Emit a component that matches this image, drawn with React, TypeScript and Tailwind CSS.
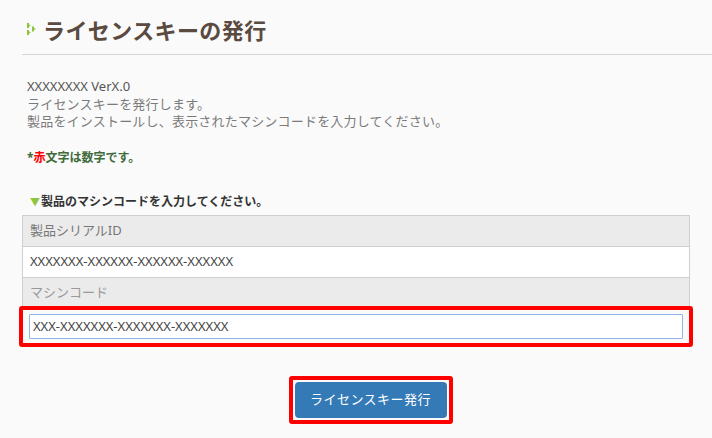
import React from "react";

function HeadIcon() {
  return (
    <svg width="9" height="12" viewBox="0 0 9 12" className="shrink-0">
      <path d="M0 0h2v1.5l2 1-2 1V5H0z" fill="#8cc63f" />
      <path d="M5 3.5h2V5l2 1-2 1v1.5H5z" fill="#8cc63f" />
      <path d="M0 7h2v1.5l2 1-2 1V12H0z" fill="#8cc63f" />
    </svg>
  );
}

export default function App() {
  return (
    <div
      className="w-[712px] h-[438px] bg-[#fafafa] overflow-hidden"
      style={{ fontFamily: '"Noto Sans", "Noto Sans CJK JP", sans-serif' }}
    >
      {/* Title */}
      <div className="ml-[22px] border-b border-[#d4d4d4] h-[55px] flex items-center pl-[5px] gap-[7px]">
        <div className="pt-[4px]">
          <HeadIcon />
        </div>
        <h1 className="text-[22px] font-bold text-[#5b4a40] tracking-[0.4px] leading-none pt-[5px]">
          ライセンスキーの発行
        </h1>
      </div>

      {/* Description */}
      <div className="pl-[27px] pt-[23px] text-[13px] leading-[17.5px] tracking-[0.2px] text-[#7a7a7a]">
        <p className="text-[#555] tracking-normal">XXXXXXXX VerX.0</p>
        <p>ライセンスキーを発行します。</p>
        <p>製品をインストールし、表示されたマシンコードを入力してください。</p>
        <p className="mt-[18px] text-[12px] tracking-normal font-bold text-[#3f6b3a]">
          *<span className="text-[#ff0000]">赤</span>文字は数字です。
        </p>
      </div>

      {/* Form */}
      <div className="mt-[28px] px-[22px]">
        <div className="flex items-center gap-[1px] pl-[8px] text-[12px] font-bold text-[#333] h-[16px]">
          <span className="text-[#8cc63f] text-[10px]">▼</span>
          <span>製品のマシンコードを入力してください。</span>
        </div>
        <div className="mt-[5px] border-x border-t border-[#cfcfcf]">
          <div className="h-[31px] bg-[#ebebeb] border-b border-[#cfcfcf] flex items-center pl-[7px] text-[13px] text-[#777]">
            製品シリアルID
          </div>
          <div className="h-[31px] bg-white border-b border-[#cfcfcf] flex items-center pl-[7px] text-[13px] text-[#444]">
            XXXXXXX-XXXXXX-XXXXXX-XXXXXX
          </div>
          <div className="h-[28px] bg-[#ebebeb] flex items-center pl-[7px] pt-[1px] text-[13px] text-[#999]">
            マシンコード
          </div>
        </div>
        <div className="-mx-[3px] border-[4px] border-[#ff0000] rounded-[3px] h-[41px] flex items-center px-[6px]">
          <div className="flex-1 h-[25px] bg-white border border-[#8fb4ea] rounded-[1px] flex items-center pl-[3px] text-[13px] text-[#444]">
            XXX-XXXXXXX-XXXXXXX-XXXXXXX
          </div>
        </div>
      </div>

      {/* Button */}
      <div className="mt-[29px] flex justify-center">
        <div className="ml-[29px] border-[4px] border-[#ff0000] rounded-[3px] p-[2px]">
          <button className="w-[152px] h-[36px] bg-[#337ab7] rounded-[4px] text-white text-[13px] tracking-[0.5px]">
            ライセンスキー発行
          </button>
        </div>
      </div>
    </div>
  );
}
